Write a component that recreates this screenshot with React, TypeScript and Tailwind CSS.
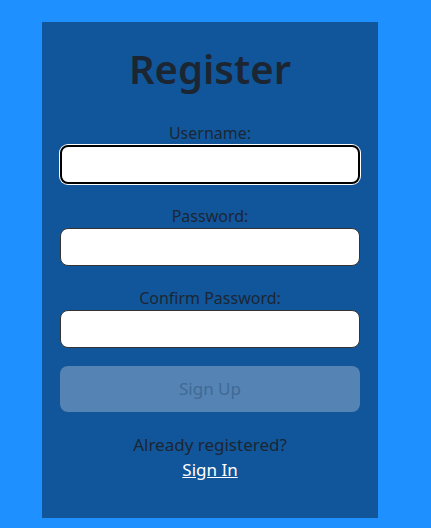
export default function App() {
  return (
    <div className="min-h-screen bg-[#1e90ff] pt-[22px] pl-[42px]" style={{ fontFamily: '"Noto Sans", "Open Sans", sans-serif' }}>
      <section className="w-[336px] h-[496px] bg-[#11569a] px-[18px] flex flex-col text-[#1c2633]">
        <h1 className="text-center text-[40px] font-semibold leading-none mt-[27px] mb-[33px]">Register</h1>
        <form className="flex flex-col">
          <label htmlFor="username" className="text-center text-[16px] leading-[22px]">Username:</label>
          <input
            id="username"
            type="text"
            className="mt-[1px] h-[39px] w-full rounded-[8px] bg-white border-2 border-black outline-none shadow-[0_0_0_1px_#ffffff]"
          />
          <label htmlFor="password" className="text-center text-[16px] leading-[22px] mt-[21px]">Password:</label>
          <input
            id="password"
            type="password"
            className="mt-[1px] h-[38px] w-full rounded-[8px] bg-white border border-[#333] outline-none"
          />
          <label htmlFor="confirm" className="text-center text-[16px] leading-[22px] mt-[21px]">Confirm Password:</label>
          <input
            id="confirm"
            type="password"
            className="mt-[1px] h-[38px] w-full rounded-[8px] bg-white border border-[#333] outline-none"
          />
          <button
            type="button"
            disabled
            className="mt-[18px] h-[46px] w-full rounded-[8px] bg-[#5583b3] text-[#3f6a96] text-[17px]"
          >
            Sign Up
          </button>
        </form>
        <p className="text-center text-[17px] leading-[22px] mt-[22px]">
          Already registered?
          <br />
          <a href="#" className="text-white underline leading-[28px]">Sign In</a>
        </p>
      </section>
    </div>
  );
}
